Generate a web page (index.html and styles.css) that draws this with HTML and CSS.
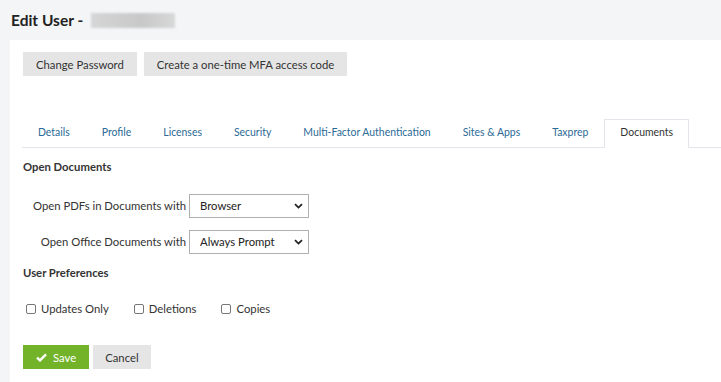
FILE: index.html
```html
<!DOCTYPE html>
<html lang="en">
<head>
  <meta charset="UTF-8">
  <title>Edit User</title>
  <link rel="stylesheet" href="styles.css">
</head>
<body>
  <div class="page-head">
    <h1>Edit User -</h1>
    <span class="blur-name"></span>
  </div>

  <div class="panel">
    <div class="actions">
      <button class="btn">Change Password</button>
      <button class="btn">Create a one-time MFA access code</button>
    </div>

    <ul class="tabs">
      <li>Details</li>
      <li>Profile</li>
      <li>Licenses</li>
      <li>Security</li>
      <li>Multi-Factor Authentication</li>
      <li>Sites &amp; Apps</li>
      <li>Taxprep</li>
      <li class="active">Documents</li>
    </ul>

    <h3>Open Documents</h3>
    <div class="form-grid">
      <label>Open PDFs in Documents with</label>
      <div class="select">
        <span>Browser</span>
        <svg width="9" height="6" viewBox="0 0 9 6"><path d="M1 1.2 4.5 4.6 8 1.2" fill="none" stroke="#222" stroke-width="1.8"/></svg>
      </div>
      <label>Open Office Documents with</label>
      <div class="select">
        <span>Always Prompt</span>
        <svg width="9" height="6" viewBox="0 0 9 6"><path d="M1 1.2 4.5 4.6 8 1.2" fill="none" stroke="#222" stroke-width="1.8"/></svg>
      </div>
    </div>

    <h3>User Preferences</h3>
    <div class="checks">
      <label><input type="checkbox"> Updates Only</label>
      <label><input type="checkbox"> Deletions</label>
      <label><input type="checkbox"> Copies</label>
    </div>

    <div class="footer-actions">
      <button class="btn btn-save">
        <svg width="11" height="9" viewBox="0 0 11 9"><path d="M1 4.6 4 7.4 10 1.4" fill="none" stroke="#fff" stroke-width="2.4"/></svg>
        Save
      </button>
      <button class="btn">Cancel</button>
    </div>
  </div>
</body>
</html>
```

FILE: styles.css
```css
* {
  margin: 0;
  padding: 0;
  box-sizing: border-box;
}

body {
  background: #f4f5f7;
  font-family: Lato, "Open Sans", sans-serif;
  font-size: 11.3px;
  line-height: 16px;
  color: #333;
  height: 382px;
  overflow: hidden;
}

.page-head {
  height: 40px;
  display: flex;
  align-items: center;
  gap: 8px;
  padding-left: 11px;
}

h1 {
  font-size: 15.5px;
  font-weight: bold;
  color: #222;
}

.blur-name {
  width: 84px;
  height: 15px;
  background: linear-gradient(90deg, #d6d6d6, #c8c8c8 60%, #d8d8d8);
  filter: blur(1px);
}

.panel {
  margin-left: 10px;
  background: #fff;
  min-height: 342px;
  padding: 12px 0 0 12px;
}

.actions {
  display: flex;
  gap: 7px;
  margin-left: 1px;
}

.btn {
  height: 24px;
  padding: 0 13px;
  border: none;
  background: #e5e5e5;
  font-family: inherit;
  font-size: 11.3px;
  color: #333;
}

.tabs {
  list-style: none;
  display: flex;
  margin-top: 43px;
  border-bottom: 1px solid #e2e6ea;
}

.tabs li {
  height: 28px;
  line-height: 25px;
  padding: 0 15px;
  color: #2b6a96;
  font-size: 10.45px;
  border: 1px solid transparent;
  border-bottom: none;
}

.tabs li.active {
  color: #333;
  border-color: #e2e6ea;
  background: #fff;
  margin-bottom: -1px;
  height: 29px;
}

h3 {
  font-size: 11.3px;
  font-weight: bold;
  color: #333;
  margin-left: 1px;
}

.tabs + h3 {
  margin-top: 11px;
}

.form-grid {
  display: grid;
  grid-template-columns: 164px auto;
  justify-content: start;
  align-items: center;
  column-gap: 3px;
  row-gap: 12px;
  margin-top: 19px;
}

.form-grid label {
  text-align: right;
}

.select {
  width: 120px;
  height: 24px;
  display: flex;
  align-items: center;
  justify-content: space-between;
  padding: 0 5px 0 10px;
  border: 1px solid #b0b0b0;
  color: #222;
}

.form-grid + h3 {
  margin-top: 11px;
}

.checks {
  display: flex;
  gap: 25px;
  margin-top: 20px;
  margin-left: 4px;
}

.checks label {
  display: flex;
  align-items: center;
  gap: 5px;
}

.checks input {
  appearance: none;
  width: 10px;
  height: 10px;
  border: 1px solid #777;
  border-radius: 2px;
}

.footer-actions {
  display: flex;
  gap: 4px;
  margin-top: 28px;
  margin-left: 1px;
}

.footer-actions .btn {
  padding: 0 12px;
}

.footer-actions .btn-save {
  background: #72b32a;
  color: #fff;
  display: flex;
  align-items: center;
  gap: 6px;
  padding: 0 13px;
}
```
